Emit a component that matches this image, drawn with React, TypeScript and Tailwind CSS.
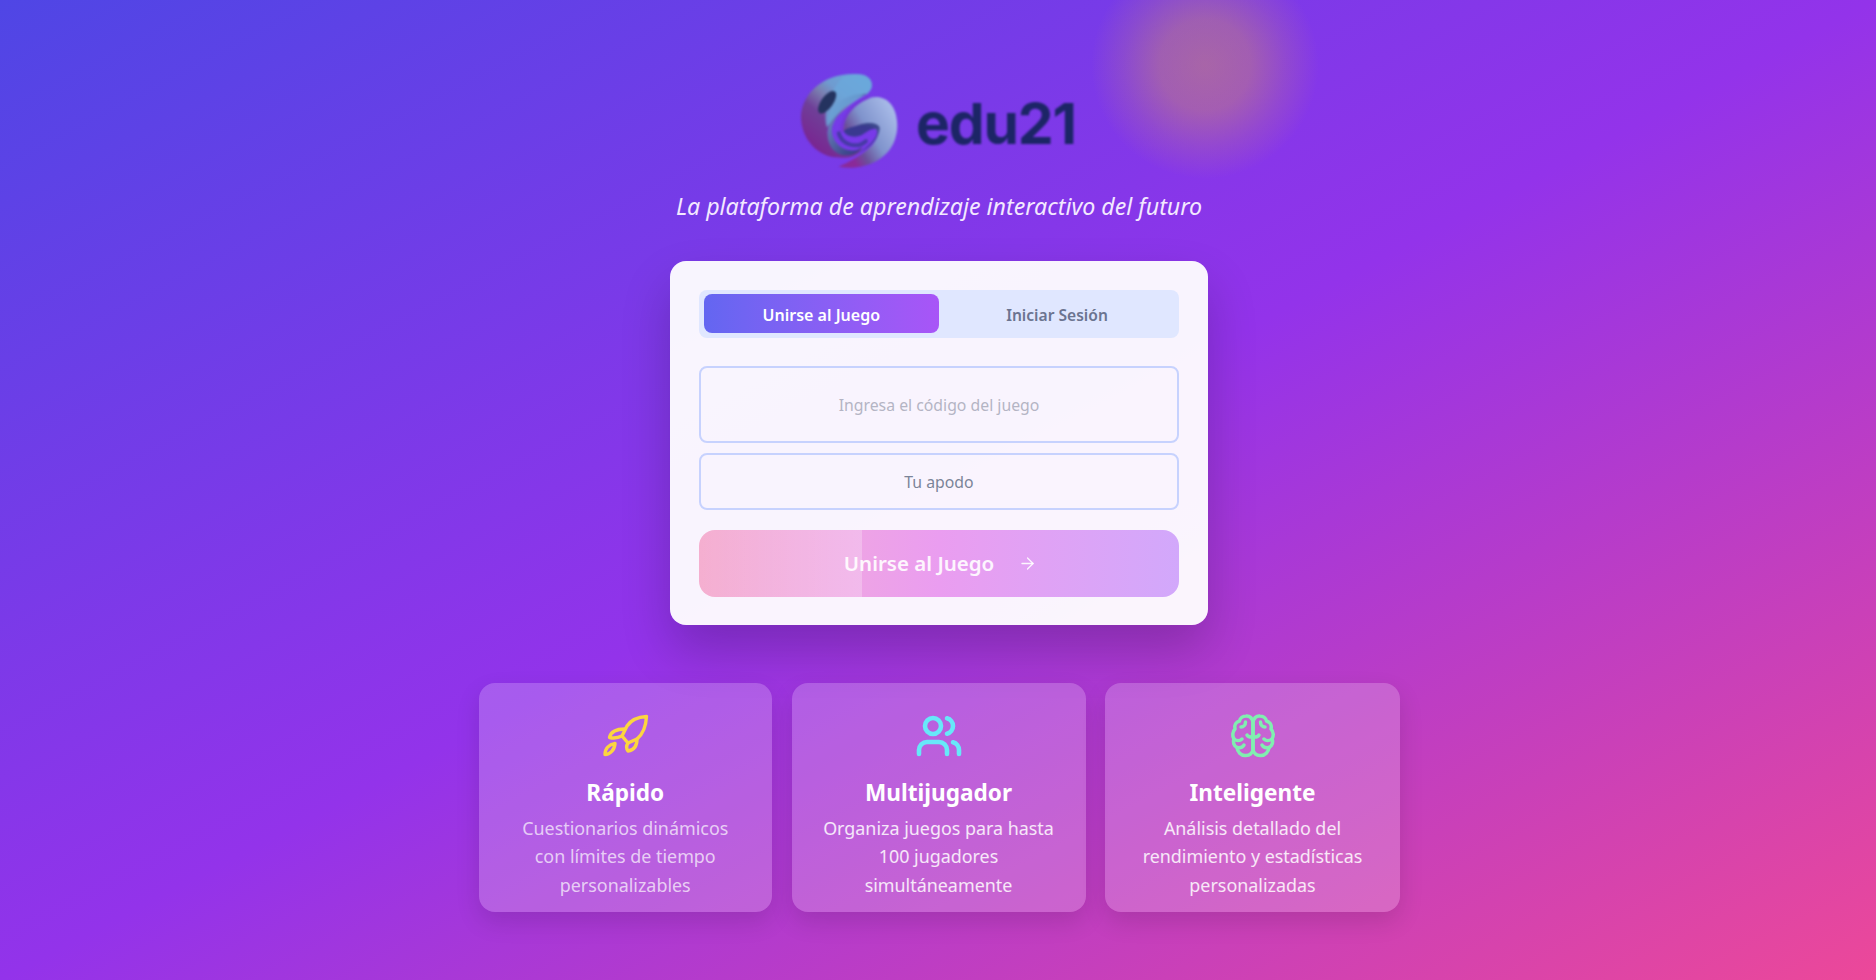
import { ArrowRight, Users } from "lucide-react";

function Logo() {
  return (
    <svg width="98" height="97" viewBox="33 38 296 296" preserveAspectRatio="none" className="blur-[0.8px]">
      <defs>
        <linearGradient id="a" x1="0.85" y1="0.05" x2="0.2" y2="0.95">
          <stop offset="0" stopColor="#69a9dc" />
          <stop offset="0.28" stopColor="#6f9bd0" />
          <stop offset="0.42" stopColor="#7a7fb0" />
          <stop offset="0.62" stopColor="#6f3f98" />
          <stop offset="1" stopColor="#7b2290" />
        </linearGradient>
        <linearGradient id="b" x1="0.9" y1="0.2" x2="0.15" y2="0.75">
          <stop offset="0" stopColor="#a5b8e6" />
          <stop offset="0.5" stopColor="#7f93cc" />
          <stop offset="0.8" stopColor="#6a509a" />
          <stop offset="1" stopColor="#8a2a98" />
        </linearGradient>
        <linearGradient id="c" x1="0" y1="0" x2="1" y2="1">
          <stop offset="0" stopColor="#7d9cd0" />
          <stop offset="0.7" stopColor="#3f4a8e" />
          <stop offset="1" stopColor="#3a2f85" />
        </linearGradient>
      </defs>
      <path d="M215 42C252 46 262 82 236 102C196 122 150 160 120 200C106 228 130 270 172 282C192 288 208 280 222 262C214 288 186 300 150 296C88 296 36 240 36 170C40 96 110 32 215 42Z" fill="url(#a)" />
      <path d="M120 200C100 150 170 95 236 102C180 118 146 160 132 196C122 225 140 262 175 272C198 278 210 272 222 262C208 285 186 292 160 288C126 280 108 240 120 200Z" fill="url(#c)" />
      <path d="M165 50C190 40 250 44 250 76C250 96 210 104 160 150C140 170 120 190 115 205C100 170 120 90 165 50Z" fill="#6ba8db" opacity="0.75" />
      <path d="M326 185C322 128 282 100 240 116C196 134 164 170 164 216C192 198 245 186 266 214C276 256 210 296 150 324C222 338 300 304 320 240C326 222 328 204 326 185Z" fill="url(#b)" />
      <path d="M240 112C196 130 158 168 158 218" fill="none" stroke="#7436d8" strokeWidth="7" />
      <path d="M164 216C178 236 205 236 222 226C240 212 262 200 266 214C270 235 240 262 205 285C240 270 272 240 274 206C270 190 240 186 212 196C190 204 172 206 164 216Z" fill="#2f3a80" opacity="0.85" />
      <path d="M150 222C160 258 205 270 232 246" fill="none" stroke="#303b86" strokeWidth="12" strokeLinecap="round" opacity="0.7" />
      <ellipse cx="115" cy="127" rx="18" ry="40" transform="rotate(35 115 127)" fill="#24335f" />
    </svg>
  );
}

function RocketIcon() {
  return (
    <svg width="60" height="60" viewBox="0 0 60 60" fill="none" stroke="#fcd53f" strokeWidth="3.4" strokeLinejoin="round" strokeLinecap="round" className="translate-x-[1px]">
      <path d="M50.5 10.5C42 11 35 14 31 20L26 30L32 37L41 33C47 28 50 20 50.5 10.5Z" />
      <path d="M29 23C22 23 15 25 13.5 31.5C18 32.5 22 32 26 30" />
      <path d="M41 33C41 39 39 44 32 45C30.5 43 30 40 32 37" />
      <path d="M19 37.5C13 38.5 9 42.5 9 48.5C14 48.5 18.5 44 19 37.5Z" />
    </svg>
  );
}

function BrainHalf() {
  return (
    <>
      <path d="M30 17C30 12.5 26.5 9.5 23 10C20 10 17 12 16.5 15C13 16 11 19 12 23C9.5 25.5 9 30 11 33C9.5 36 11 40 14 41.5C14.5 46 18 49.5 22 49.5C26.5 50 30 47 30 43V17Z" />
      <path d="M30 31C28 31 25 31.5 24 29" />
      <path d="M11 33C13.5 35 17 35 19 33" />
      <path d="M22.5 16C22.5 19 20.5 21 18 21" />
      <path d="M14 41.5C17 42 20 41 21 39" />
    </>
  );
}

function BrainIcon() {
  return (
    <svg width="60" height="60" viewBox="0 0 60 60" fill="none" stroke="#80efb0" strokeWidth="3.5" strokeLinejoin="round" strokeLinecap="round">
      <BrainHalf />
      <g transform="matrix(-1 0 0 1 60 0)">
        <BrainHalf />
      </g>
    </svg>
  );
}

function Feature({ icon, title, lines, textClass }: { icon: React.ReactNode; title: string; lines: string[]; textClass: string }) {
  return (
    <div className="flex h-[229px] flex-col items-center rounded-2xl bg-white/20 pt-[31px] shadow-[0_10px_25px_rgba(0,0,0,0.12)]">
      <div className="flex h-[44px] items-center justify-center text-white">{icon}</div>
      <h3 className="mt-[19px] text-[22.6px] leading-[32px] font-bold text-white">{title}</h3>
      <p className={`mt-[5px] text-center text-[17.9px] leading-[28.4px] ${textClass}`}>
        {lines.map((l) => (
          <span key={l} className="block">{l}</span>
        ))}
      </p>
    </div>
  );
}

export default function App() {
  return (
    <div className="relative flex h-[980px] flex-col items-center overflow-hidden bg-[linear-gradient(to_bottom_right,#4f46e5_0%,#9333ea_50%,#ec4899_100%)] pl-[2px] font-['Noto_Sans',sans-serif]">
      <div className="absolute left-[1090px] top-[-50px] h-[230px] w-[230px] rounded-full bg-[radial-gradient(circle,rgba(251,191,36,0.33)_0%,rgba(251,191,36,0.28)_28%,rgba(251,191,36,0.12)_50%,rgba(251,191,36,0)_70%)]" />
      <div className="relative mt-[73px] flex h-[97px] items-start pr-[1.6px]">
        <Logo />
        <span className="mt-[22px] ml-[17.6px] font-['Inter',sans-serif] text-[57px] leading-none font-bold tracking-[-1.2px] text-[#1c2566] blur-[0.8px]">edu21</span>
      </div>
      <p className="relative mt-[19px] text-[23.2px] leading-[34px] text-[#f3e8ff] italic">La plataforma de aprendizaje interactivo del futuro</p>
      <div className="relative mt-[38px] h-[364px] w-[538px] rounded-2xl bg-white/95 p-[28.8px] shadow-[0_25px_50px_rgba(0,0,0,0.2)]">
        <div className="flex h-[48px] rounded-lg bg-[#e0e7ff] pt-[4px] pr-[4px] pb-[5px] pl-[5px]">
          <div className="flex w-[235px] items-center justify-center rounded-lg bg-gradient-to-r from-[#6366f1] to-[#a855f7] pt-[4px] text-[16px] font-semibold text-white">Unirse al Juego</div>
          <div className="flex flex-1 items-center justify-center pt-[4px] text-[15.6px] font-semibold text-[#6b7490]">Iniciar Sesión</div>
        </div>
        <div className="mt-[28px] flex h-[77px] items-center justify-center rounded-lg border-2 border-[#c7d2fe] pt-[4px] text-[15.8px] text-[#b4b4c4]">Ingresa el código del juego</div>
        <div className="mt-[10px] flex h-[57px] items-center justify-center rounded-lg border-2 border-[#c7d2fe] pt-[4px] text-[15.8px] text-[#7b8498]">Tu apodo</div>
        <div className="relative mt-[20px] flex h-[67px] items-center justify-center overflow-hidden rounded-2xl bg-gradient-to-r from-[#f5afd0] via-[#ea9df0] to-[#d2a8fb] pl-[3px] text-[20.5px] font-semibold text-white/90">
          <div className="absolute inset-y-0 left-0 w-[163px] bg-gradient-to-r from-transparent to-white/25" />
          <span className="relative">Unirse al Juego</span>
          <ArrowRight className="relative ml-[24px] h-[19px] w-[19px]" strokeWidth={1.6} />
        </div>
      </div>
      <div className="relative mt-[58px] grid w-[921px] grid-cols-[293.5px_294px_295px] gap-[19.5px]">
        <Feature icon={<RocketIcon />} title="Rápido" lines={["Cuestionarios dinámicos", "con límites de tiempo", "personalizables"]} textClass="text-white/70" />
        <Feature icon={<Users size={48} color="#67e8f9" strokeWidth={2.3} />} title="Multijugador" lines={["Organiza juegos para hasta", "100 jugadores", "simultáneamente"]} textClass="text-white/85" />
        <Feature icon={<BrainIcon />} title="Inteligente" lines={["Análisis detallado del", "rendimiento y estadísticas", "personalizadas"]} textClass="text-white/85" />
      </div>
    </div>
  );
}
